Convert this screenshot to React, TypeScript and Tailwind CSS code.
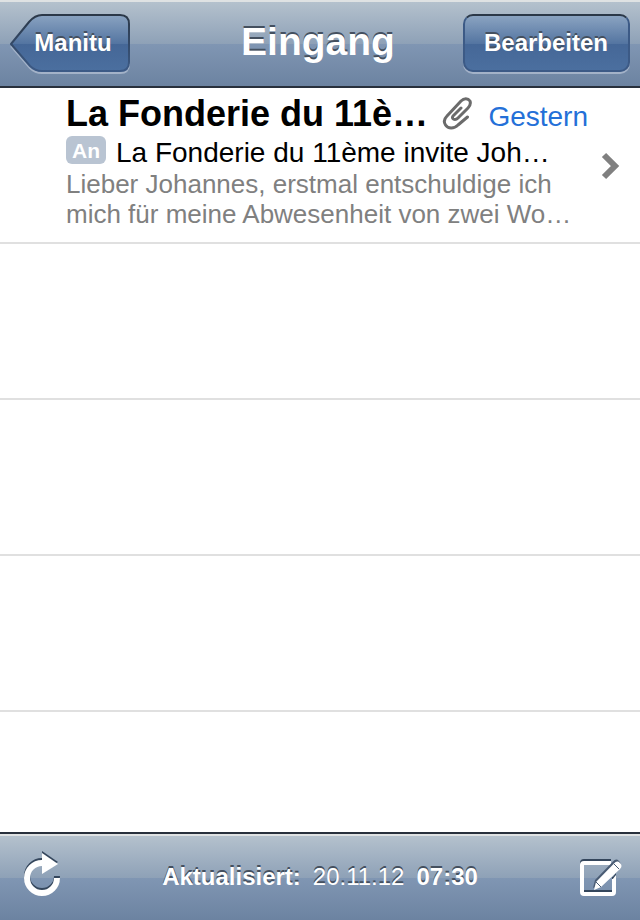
const message = {
  sender: 'La Fonderie du 11è…',
  date: 'Gestern',
  subject: 'La Fonderie du 11ème invite Joh…',
  preview: ['Lieber Johannes, erstmal entschuldige ich', 'mich für meine Abwesenheit von zwei Wo…'],
};

const emptyRows = [1, 2, 3];

const barText = 'text-white [text-shadow:0_-2px_0_#44505f]';

function BackShape() {
  return (
    <svg viewBox="0 0 120 60" className="absolute inset-0 w-full h-full" aria-hidden="true">
      <defs>
        <linearGradient id="back-fill" x1="0" y1="0" x2="0" y2="1">
          <stop offset="0" stopColor="#8aa3c1" />
          <stop offset="0.51" stopColor="#5475a1" />
          <stop offset="0.52" stopColor="#456797" />
          <stop offset="1" stopColor="#4b6f9f" />
        </linearGradient>
        <linearGradient id="back-edge" x1="0" y1="0" x2="0" y2="1">
          <stop offset="0" stopColor="#2b3848" />
          <stop offset="1" stopColor="#3c5a86" />
        </linearGradient>
      </defs>
      <path
        d="M1 32 L20 54 Q25 59 32 59 H110 Q119 59 119 50"
        fill="none"
        stroke="#a3b2c8"
        strokeWidth="2"
      />
      <path
        d="M1 30 L19 8 Q25 1 32 1 H110 Q119 1 119 10 V48 Q119 57 110 57 H32 Q25 57 20 52 Z"
        fill="url(#back-fill)"
        stroke="url(#back-edge)"
        strokeWidth="2"
        strokeLinejoin="round"
      />
    </svg>
  );
}

function PaperclipIcon() {
  return (
    <svg viewBox="0 0 30 34" className="w-[30px] h-[34px] shrink-0" aria-hidden="true">
      <path
        d="M25.500 21 L16 29 C12 33 6 33 3.500 29 C1.500 26 2 23 5 20 L19 5 C22 2 26 2 28 5 C29 8 28 10 26 12 L16 22 C13 25 9 23 11 20 L19 12"
        fill="none"
        stroke="#6b6b6b"
        strokeWidth="3"
        strokeLinecap="round"
        strokeLinejoin="round"
      />
    </svg>
  );
}

function RefreshGlyph() {
  return (
    <>
      <path d="M37 27 A15 15 0 1 1 22 12" fill="none" stroke="currentColor" strokeWidth="6" />
      <path d="M22 2 L38 13 L22 23 Z" fill="currentColor" />
    </>
  );
}

function ComposeFrame() {
  return (
    <>
      <path
        d="M33 12 H6 Q4 12 4 14 V41 Q4 43 6 43 H34 Q36 43 36 41 V28"
        fill="none"
        stroke="currentColor"
        strokeWidth="4"
      />
      <path d="M34 30 V29 L38 24 V30 Z" fill="currentColor" />
    </>
  );
}

function ComposePencil() {
  return (
    <path
      d="M16 39 L18 31 L36 12.500 Q39 9 42 12 Q45 15 42 18 L23 36 Z"
      fill="currentColor"
    />
  );
}

export default function App() {
  return (
    <div className="flex min-h-screen flex-col bg-white font-['Liberation_Sans',Arial,sans-serif]">
      <header className="grid h-[88px] grid-cols-[1fr_auto_1fr] items-center border-t-2 border-b-2 border-t-[#dfe2e3] border-b-[#28303c] bg-[linear-gradient(#b4c1cd,#8ea1b7_50%,#8096b3_50%,#6c83a1)] px-[10px]">
        <button
          type="button"
          className={`relative h-[60px] w-[120px] justify-self-start pb-[2px] pl-[6px] text-2xl font-bold ${barText}`}
        >
          <BackShape />
          <span className="relative">Manitu</span>
        </button>
        <h1 className={`pr-1 pb-1 text-[39px] leading-[48px] font-bold ${barText}`}>Eingang</h1>
        <button
          type="button"
          className={`mb-[2px] h-[58px] justify-self-end rounded-[10px] border-2 border-[#3c5a86] border-t-[#2b3848] bg-[linear-gradient(#8aa3c1,#5475a1_51%,#456797_51%,#4b6f9f)] pr-5 pl-[19px] text-2xl font-bold shadow-[0_2px_0_#a3b2c8] ${barText}`}
        >
          Bearbeiten
        </button>
      </header>

      <main className="flex grow flex-col">
        <ul>
          <li className="h-[156px] border-b-2 border-[#e0e0e0]">
            <a href="#message" className="flex items-center pt-1 pr-5 pl-[66px]">
              <div className="min-w-0 grow">
                <div className="flex h-[44px] items-center">
                  <h2 className="text-[36px] leading-[44px] font-bold whitespace-nowrap text-black">
                    {message.sender}
                  </h2>
                  <span className="ml-[14px] flex pb-[2px]">
                    <PaperclipIcon />
                  </span>
                  <span className="ml-auto pt-[6px] pr-3 text-[28px] leading-[36px] text-[#2470d8]">
                    {message.date}
                  </span>
                </div>
                <div className="flex items-start gap-[10px]">
                  <span className="h-7 w-10 rounded-md bg-[#b9c4d2] text-center text-[21px] leading-[30px] font-bold text-white">
                    An
                  </span>
                  <span className="text-[28px] leading-[33px] whitespace-nowrap text-black">
                    {message.subject}
                  </span>
                </div>
                <p className="text-[26px] leading-[30px] whitespace-nowrap text-[#808080]">
                  {message.preview[0]}
                  <br />
                  {message.preview[1]}
                </p>
              </div>
              <svg viewBox="0 0 20 28" className="mt-[10px] h-7 w-5 shrink-0" aria-hidden="true">
                <path d="M4 3 L15 14 L4 25" fill="none" stroke="#808080" strokeWidth="6" />
              </svg>
            </a>
          </li>
          {emptyRows.map((row) => (
            <li key={row} className="h-[156px] border-b-2 border-[#e0e0e0]" />
          ))}
        </ul>
      </main>

      <footer className="border-t-2 border-[#28303c]">
        <div className="flex h-[86px] items-center justify-between border-t-2 border-[#dfe2e3] bg-[linear-gradient(#b4c1cd,#8ea1b7_50%,#8096b3_50%,#6c83a1)] pr-4 pb-1 pl-5">
          <button type="button" aria-label="Aktualisieren">
            <svg viewBox="0 0 46 50" className="h-[50px] w-[46px]" aria-hidden="true">
              <g className="text-[#34465c]" transform="translate(0 -2)">
                <RefreshGlyph />
              </g>
              <g className="text-white">
                <RefreshGlyph />
              </g>
            </svg>
          </button>
          <p className={`flex pt-[2px] pr-1 text-2xl ${barText}`}>
            <span className="font-bold">Aktualisiert:</span>
            <span className="ml-3">20.11.12</span>
            <span className="ml-3 font-bold">07:30</span>
          </p>
          <button type="button" aria-label="Neue E-Mail">
            <svg viewBox="0 0 46 50" className="h-[50px] w-[46px]" aria-hidden="true">
              <g className="text-[#34465c]" transform="translate(0 -2)">
                <ComposeFrame />
              </g>
              <g className="text-white">
                <ComposeFrame />
              </g>
              <g className="text-[#4a5c74]" transform="translate(-1 -2)">
                <ComposePencil />
              </g>
              <g className="text-white">
                <ComposePencil />
              </g>
              <path d="M18 31 L23 36 M36 13 L41 18" stroke="#4a5c74" strokeWidth="1" />
            </svg>
          </button>
        </div>
      </footer>
    </div>
  );
}
